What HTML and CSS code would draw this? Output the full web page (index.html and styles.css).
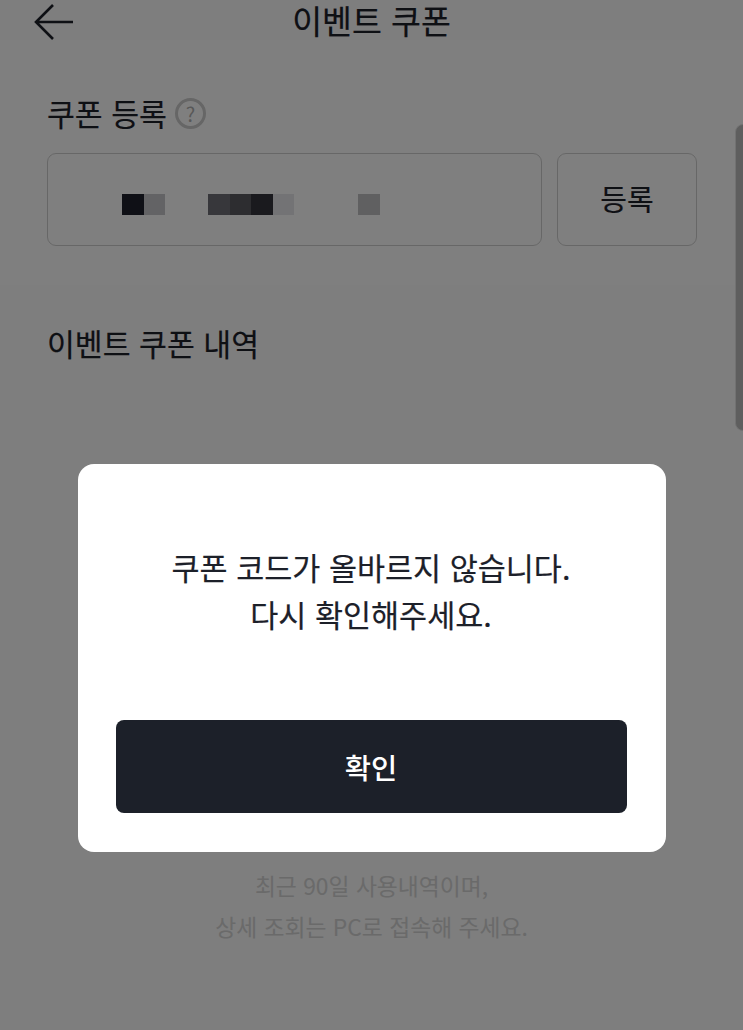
FILE: index.html
```html
<!DOCTYPE html>
<html lang="ko">
<head>
<meta charset="UTF-8">
<meta name="viewport" content="width=device-width, initial-scale=1.0">
<title>이벤트 쿠폰</title>
<link rel="stylesheet" href="styles.css">
</head>
<body>
    <div class="page">
        <header class="top-bar">
            <svg class="back-icon" width="40" height="36" viewBox="0 0 40 36" fill="none">
                <path d="M19 1 L2 18 L19 35 M2 18 H39" stroke="#1c2029" stroke-width="2.6"/>
            </svg>
            <h1>이벤트 쿠폰</h1>
        </header>

        <section class="register">
            <div class="section-title">
                <h2>쿠폰 등록</h2>
                <span class="help-icon">?</span>
            </div>
            <div class="register-row">
                <div class="code-input">
                    <span class="blur b1"></span><span class="blur b2"></span>
                    <span class="blur b3 group-start"></span><span class="blur b4"></span><span class="blur b5"></span><span class="blur b6"></span>
                    <span class="blur b7 last-start"></span>
                </div>
                <button type="button" class="register-button">등록</button>
            </div>
        </section>

        <section class="history">
            <h2>이벤트 쿠폰 내역</h2>
            <p class="history-note">최근 90일 사용내역이며,<br>상세 조회는 PC로 접속해 주세요.</p>
        </section>
    </div>

    <div class="scroll-thumb"></div>

    <div class="dim">
        <div class="modal">
            <p class="modal-text">쿠폰 코드가 올바르지 않습니다.<br>다시 확인해주세요.</p>
            <button type="button" class="modal-button">확인</button>
        </div>
    </div>
</body>
</html>
```

FILE: styles.css
```css
html, body {
  height: 100%;
}
body {
  margin: 0;
  font-family: "Noto Sans CJK KR", "Noto Sans", sans-serif;
  color: #1c2029;
  background-color: #fcfcfc;
  overflow: hidden;
}
h1, h2, p {
  margin: 0;
  font-weight: 400;
}
.page {
  height: 100%;
}
.top-bar {
  position: relative;
  height: 40px;
  display: flex;
  justify-content: center;
  align-items: center;
}
.top-bar h1 {
  font-size: 32.5px;
  line-height: 40px;
  -webkit-text-stroke: 0.2px #1c2029;
}
.back-icon {
  position: absolute;
  left: 34px;
  top: 4px;
}
.register {
  height: 245px;
  padding: 0 46px 0 47px;
  box-sizing: border-box;
  background-color: #fff;
}
.section-title {
  display: flex;
  align-items: center;
  gap: 10px;
  padding-top: 51px;
  height: 44px;
}
.section-title h2,
.history h2 {
  font-size: 30.3px;
  line-height: 44px;
  -webkit-text-stroke: 0.2px #1c2029;
}
.help-icon {
  width: 31px;
  height: 31px;
  margin-left: -2px;
  box-sizing: border-box;
  border: 3px solid #cccccc;
  border-radius: 50%;
  color: #b0b0b0;
  font-size: 20px;
  line-height: 25px;
  text-align: center;
}
.register-row {
  display: flex;
  gap: 15px;
  margin-top: 18px;
  height: 93px;
}
.code-input {
  flex: 1;
  display: flex;
  align-items: center;
  padding: 9px 0 0 74px;
  border: 1px solid #cfcfcf;
  border-radius: 9px;
}
.blur {
  width: 21.5px;
  height: 21px;
}
.group-start {
  margin-left: 43px;
}
.last-start {
  margin-left: 64px;
}
.b1 { background-color: #1e202c; }
.b2 { background-color: #c6c6ca; }
.b3 { background-color: #6e6e76; }
.b4 { background-color: #5a5a60; }
.b5 { background-color: #34343c; }
.b6 { background-color: #e6e6ea; }
.b7 { background-color: #c0c0c2; }
.register-button {
  width: 140px;
  padding: 0 0 3px;
  font-family: inherit;
  font-size: 29px;
  color: #1c2029;
  background-color: transparent;
  border: 1px solid #cfcfcf;
  border-radius: 9px;
  -webkit-text-stroke: 0.2px #1c2029;
}
.history {
  padding: 36px 47px 0;
  position: relative;
  height: 745px;
  box-sizing: border-box;
}
.history-note {
  position: absolute;
  left: 0;
  right: 0;
  top: 580px;
  text-align: center;
  font-size: 22.8px;
  line-height: 41px;
  color: #d4d4d4;
}
.scroll-thumb {
  position: absolute;
  right: -8px;
  top: 124px;
  width: 16px;
  height: 307px;
  box-sizing: border-box;
  background-color: #bcbcbc;
  border: 1px solid #e4e4e4;
  border-radius: 8px;
}
.dim {
  position: absolute;
  inset: 0;
  background-color: rgba(0, 0, 0, 0.5);
  display: flex;
  justify-content: center;
  align-items: flex-start;
  padding-top: 464px;
  box-sizing: border-box;
}
.modal {
  width: 588px;
  height: 388px;
  padding: 80px 39px 39px 38px;
  box-sizing: border-box;
  background-color: #fff;
  border-radius: 16px;
  display: flex;
  flex-direction: column;
  justify-content: space-between;
}
.modal-text {
  font-size: 30.5px;
  line-height: 47px;
  text-align: center;
  -webkit-text-stroke: 0.2px #1c2029;
}
.modal-button {
  height: 93px;
  padding: 0;
  font-family: inherit;
  font-size: 28.5px;
  font-weight: 500;
  color: #fff;
  background-color: #1c2029;
  border: none;
  border-radius: 8px;
}
```
